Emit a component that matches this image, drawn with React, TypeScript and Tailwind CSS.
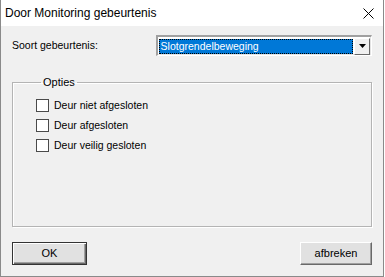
import { useState } from 'react';

const OPTIONS = ['Deur niet afgesloten', 'Deur afgesloten', 'Deur veilig gesloten'];

export default function App() {
  const [checked, setChecked] = useState<boolean[]>([false, false, false]);

  const toggle = (i: number) => {
    setChecked(prev => prev.map((c, j) => (j === i ? !c : c)));
  };

  return (
    <div className="w-[385px] h-[277px] bg-white font-['Liberation_Sans',Arial,sans-serif] text-[10.5px] text-black">
      <div className="w-[384px] h-[277px] flex flex-col border-l border-r border-b border-[#8a8a8a]">
        {/* title bar */}
        <div className="h-[26px] bg-white flex items-center justify-between pl-[4px] pr-[9px]">
          <span className="text-[12px] leading-none">Door Monitoring gebeurtenis</span>
          <svg width="11" height="11" viewBox="0 0 11 11" className="mt-[1px]">
            <path d="M0.5 0.5 L10.5 10.5 M10.5 0.5 L0.5 10.5" stroke="#000" strokeWidth="1" />
          </svg>
        </div>

        <div className="flex-1 bg-[#f0f0f0] px-[11px] pt-[9px] pb-[11px] flex flex-col">
          {/* event type row */}
          <div className="flex items-center h-[21px]">
            <span className="w-[144px] text-[10.5px]">Soort gebeurtenis:</span>
            <div className="w-[217px] h-[21px] bg-white border-t-2 border-l-2 border-[#a0a0a0] border-r border-b border-r-white border-b-white shadow-[inset_-1px_-1px_0_#e3e3e3] flex items-center pl-[1px] pr-[1px]">
              <div className="flex-1 h-[15px] border border-dotted border-black bg-[#0078d7] text-white flex items-center pl-[1px] leading-none">
                Slotgrendelbeweging
              </div>
              <div className="w-[16px] h-[17px] ml-[1px] bg-[#f0f0f0] border-t border-l border-white border-r border-b border-r-[#696969] border-b-[#696969] flex items-center justify-center">
                <svg width="7" height="4" viewBox="0 0 7 4">
                  <path d="M0 0 H7 L3.5 4 Z" fill="#000" />
                </svg>
              </div>
            </div>
          </div>

          {/* options group */}
          <fieldset className="mt-[20px] h-[151px] border border-[#b4b4b4] shadow-[1px_1px_0_#fff,inset_1px_1px_0_#fff] pl-[23px] pt-[10px]">
            <legend className="ml-[5px] px-[2px] text-[11px] leading-[13px]">Opties</legend>
            <div className="flex flex-col gap-[7px]">
              {OPTIONS.map((label, i) => (
                <label key={label} className="flex items-center h-[13px] cursor-default" onClick={() => toggle(i)}>
                  <span className="w-[13px] h-[13px] bg-white border border-[#4a4a4a] flex items-center justify-center">
                    {checked[i] && (
                      <svg width="9" height="9" viewBox="0 0 9 9">
                        <path d="M1 4.5 L3.5 7 L8 1.5" stroke="#000" strokeWidth="1.5" fill="none" />
                      </svg>
                    )}
                  </span>
                  <span className="ml-[5px] leading-none">{label}</span>
                </label>
              ))}
            </div>
          </fieldset>

          {/* buttons */}
          <div className="mt-auto flex justify-between">
            <button className="w-[75px] h-[23px] bg-[#e1e1e1] border border-[#333333] shadow-[inset_1px_1px_0_#fff,inset_-1px_-1px_0_#696969,inset_-2px_-2px_0_#a0a0a0] text-[11px] leading-none">
              OK
            </button>
            <button className="w-[72px] h-[23px] bg-[#e1e1e1] border-t border-l border-white border-r border-b border-r-[#696969] border-b-[#696969] shadow-[inset_-1px_-1px_0_#a0a0a0] text-[11px] leading-none">
              afbreken
            </button>
          </div>
        </div>
      </div>
    </div>
  );
}
